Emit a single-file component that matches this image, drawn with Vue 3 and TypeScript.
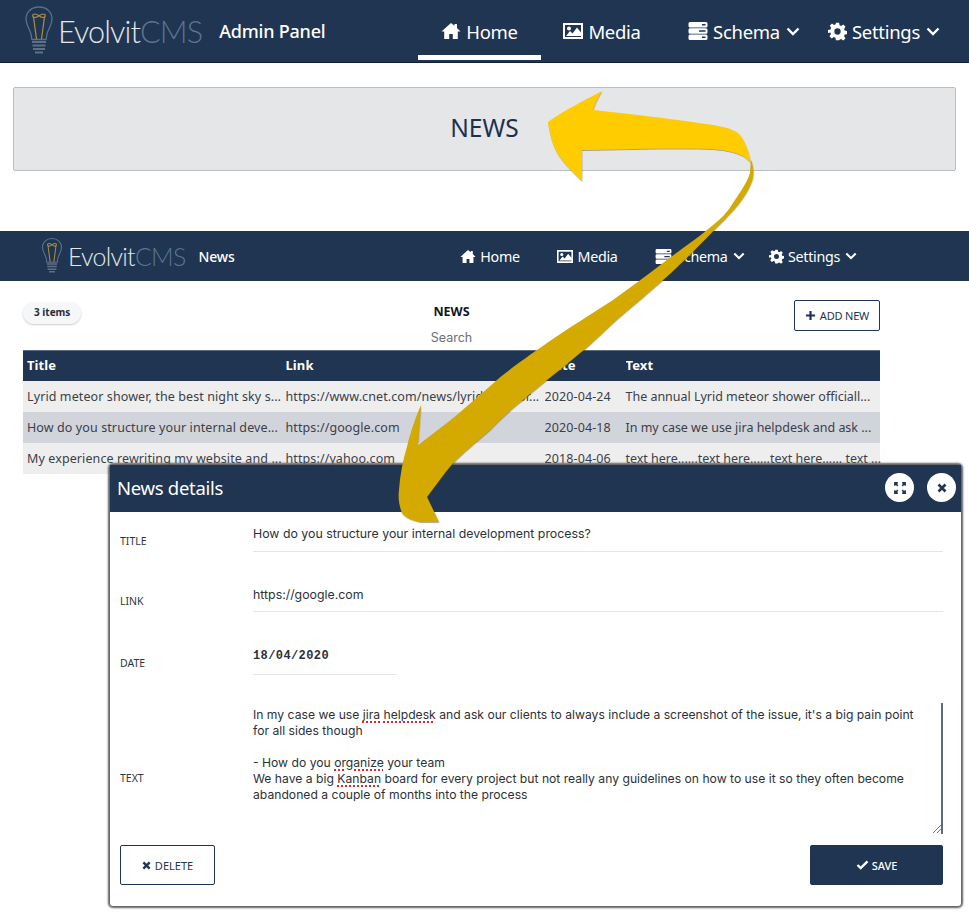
<script setup lang="ts">
const rows = [
  { title: 'Lyrid meteor shower, the best night sky s...', link: 'https://www.cnet.com/news/lyrid-meteor...', date: '2020-04-24', text: 'The annual Lyrid meteor shower officiall...' },
  { title: 'How do you structure your internal deve...', link: 'https://google.com', date: '2020-04-18', text: 'In my case we use jira helpdesk and ask ...' },
  { title: 'My experience rewriting my website and ...', link: 'https://yahoo.com', date: '2018-04-06', text: 'text here......text here......text here...... text ...' },
]
</script>

<template>
  <div class="page">
    <header class="bar bar-main">
      <div class="logo">
        <svg class="bulb" viewBox="0 0 30 52" width="30" height="52">
          <path d="M15 2C7 2 2 7.500 2 14c0 6 3.500 9.500 5 15 .5 2 .5 4 .8 5.500h14.400c.3-1.500.3-3.500.8-5.500 1.500-5.500 5-9 5-15C28 7.500 23 2 15 2z" fill="none" stroke="#5d7087" stroke-width="1.300"/>
          <path d="M11 9c-3 0-3 3.500 0 3.500S16 9 19 9s3 3.500 0 3.500S14 9 11 9zM9.500 12l3 22M20.500 12l-3 22" fill="none" stroke="#b08f3a" stroke-width="1.200"/>
          <path d="M8 37h14M8.500 40.500h13M9 44h12M11 47.500h8" stroke="#5d7087" stroke-width="1.800" fill="none"/>
        </svg>
        <span class="brand">Evolvit<span class="cms">CMS</span></span>
      </div>
      <span class="caption">Admin Panel</span>
      <nav class="nav">
        <a class="nav-item active">
          <svg viewBox="0 0 20 18" width="20" height="18"><path d="M10 1 0.500 9.500h2.700V17h5v-5h3.600v5h5V9.500h2.700L16 6V2h-2.500v1.800z" fill="#fff"/></svg>Home
        </a>
        <a class="nav-item">
          <svg viewBox="0 0 20 18" width="20" height="18"><path fill-rule="evenodd" d="M0 1h20v16H0zM2 3v12h16V3zM3 14l4-5 2.500 2.500L14 5.500l4 5V14zM6 4.500a2 2 0 1 1 0 4 2 2 0 0 1 0-4z" fill="#fff"/></svg>Media
        </a>
        <a class="nav-item">
          <svg viewBox="0 0 20 18" width="20" height="18"><path fill-rule="evenodd" d="M2 0h16a1.500 1.500 0 0 1 1.500 1.500V4A1.500 1.500 0 0 1 18 5.500H2A1.500 1.500 0 0 1 .5 4V1.500A1.500 1.500 0 0 1 2 0zM14 2v1.500h3.500V2zM2 6.300h16a1.500 1.500 0 0 1 1.500 1.500v2.400a1.500 1.500 0 0 1-1.500 1.500H2a1.500 1.500 0 0 1-1.500-1.500V7.800A1.500 1.500 0 0 1 2 6.300zM11 8.300v1.500h6.500V8.300zM2 12.500h16a1.500 1.500 0 0 1 1.500 1.500v2.500A1.500 1.500 0 0 1 18 18H2a1.500 1.500 0 0 1-1.500-1.500V14A1.500 1.500 0 0 1 2 12.500zM14 14.500V16h3.500v-1.500z" fill="#fff"/></svg>Schema<svg class="chev" viewBox="0 0 14 9" width="14" height="9"><path d="M1.500 1.500 7 7l5.500-5.500" fill="none" stroke="#fff" stroke-width="2.400"/></svg>
        </a>
        <a class="nav-item">
          <svg viewBox="0 0 24 24" width="19" height="19"><path fill-rule="evenodd" d="M10 1h4l.6 3.200 2 .8 2.700-1.800 2.800 2.800-1.800 2.700.8 2 3.200.6v4l-3.200.6-.8 2 1.800 2.700-2.800 2.800-2.700-1.800-2 .8L14 23h-4l-.6-3.200-2-.8-2.700 1.800-2.800-2.800 1.800-2.700-.8-2L0 14v-4l3.200-.6.800-2L2.200 4.700 5 1.900l2.700 1.800 2-.8zM12 8a4 4 0 1 0 0 8 4 4 0 0 0 0-8z" fill="#fff"/></svg>Settings<svg class="chev" viewBox="0 0 14 9" width="14" height="9"><path d="M1.500 1.500 7 7l5.500-5.500" fill="none" stroke="#fff" stroke-width="2.400"/></svg>
        </a>
      </nav>
    </header>

    <div class="banner-wrap"><div class="banner">NEWS</div></div>

    <header class="bar bar-sub">
      <div class="logo logo-sm">
        <svg class="bulb" viewBox="0 0 30 52" width="22" height="38">
          <path d="M15 2C7 2 2 7.500 2 14c0 6 3.500 9.500 5 15 .5 2 .5 4 .8 5.500h14.400c.3-1.500.3-3.500.8-5.500 1.500-5.500 5-9 5-15C28 7.500 23 2 15 2z" fill="none" stroke="#5d7087" stroke-width="1.500"/>
          <path d="M11 9c-3 0-3 3.500 0 3.500S16 9 19 9s3 3.500 0 3.500S14 9 11 9zM9.500 12l3 22M20.500 12l-3 22" fill="none" stroke="#b08f3a" stroke-width="1.400"/>
          <path d="M8 37h14M8.500 40.500h13M9 44h12M11 47.500h8" stroke="#5d7087" stroke-width="2" fill="none"/>
        </svg>
        <span class="brand">Evolvit<span class="cms">CMS</span></span>
      </div>
      <span class="caption">News</span>
      <nav class="nav">
        <a class="nav-item">
          <svg viewBox="0 0 20 18" width="16" height="15"><path d="M10 1 0.500 9.500h2.700V17h5v-5h3.600v5h5V9.500h2.700L16 6V2h-2.500v1.800z" fill="#fff"/></svg>Home
        </a>
        <a class="nav-item">
          <svg viewBox="0 0 20 18" width="16" height="15"><path fill-rule="evenodd" d="M0 1h20v16H0zM2 3v12h16V3zM3 14l4-5 2.500 2.500L14 5.500l4 5V14zM6 4.500a2 2 0 1 1 0 4 2 2 0 0 1 0-4z" fill="#fff"/></svg>Media
        </a>
        <a class="nav-item">
          <svg viewBox="0 0 20 18" width="17" height="15"><path fill-rule="evenodd" d="M2 0h16a1.500 1.500 0 0 1 1.500 1.500V4A1.500 1.500 0 0 1 18 5.500H2A1.500 1.500 0 0 1 .5 4V1.500A1.500 1.500 0 0 1 2 0zM14 2v1.500h3.500V2zM2 6.300h16a1.500 1.500 0 0 1 1.500 1.500v2.400a1.500 1.500 0 0 1-1.500 1.500H2a1.500 1.500 0 0 1-1.500-1.500V7.800A1.500 1.500 0 0 1 2 6.300zM11 8.300v1.500h6.500V8.300zM2 12.500h16a1.500 1.500 0 0 1 1.500 1.500v2.500A1.500 1.500 0 0 1 18 18H2a1.500 1.500 0 0 1-1.500-1.500V14A1.500 1.500 0 0 1 2 12.500zM14 14.500V16h3.500v-1.500z" fill="#fff"/></svg>Schema<svg class="chev" viewBox="0 0 14 9" width="12" height="8"><path d="M1.500 1.500 7 7l5.500-5.500" fill="none" stroke="#fff" stroke-width="2.400"/></svg>
        </a>
        <a class="nav-item">
          <svg viewBox="0 0 24 24" width="15" height="15"><path fill-rule="evenodd" d="M10 1h4l.6 3.200 2 .8 2.700-1.800 2.800 2.800-1.800 2.700.8 2 3.200.6v4l-3.200.6-.8 2 1.800 2.700-2.800 2.800-2.700-1.800-2 .8L14 23h-4l-.6-3.200-2-.8-2.700 1.800-2.800-2.800 1.800-2.700-.8-2L0 14v-4l3.200-.6.800-2L2.200 4.700 5 1.900l2.700 1.800 2-.8zM12 8a4 4 0 1 0 0 8 4 4 0 0 0 0-8z" fill="#fff"/></svg>Settings<svg class="chev" viewBox="0 0 14 9" width="12" height="8"><path d="M1.500 1.500 7 7l5.500-5.500" fill="none" stroke="#fff" stroke-width="2.400"/></svg>
        </a>
      </nav>
    </header>

    <section class="list">
      <div class="list-head">
        <span class="pill">3 items</span>
        <div class="list-title">
          <strong>NEWS</strong>
          <span class="search">Search</span>
        </div>
        <button class="btn add">
          <svg viewBox="0 0 12 12" width="11" height="11"><path d="M6 1v10M1 6h10" stroke="#1f3552" stroke-width="2.400"/></svg>ADD NEW
        </button>
      </div>
      <div class="table">
        <div class="tr th"><span>Title</span><span>Link</span><span>Date</span><span>Text</span></div>
        <div v-for="r in rows" :key="r.date" class="tr"><span>{{ r.title }}</span><span>{{ r.link }}</span><span>{{ r.date }}</span><span class="last">{{ r.text }}</span></div>
      </div>
    </section>

    <section class="modal">
      <div class="modal-head">
        <span>News details</span>
        <div class="round-group">
          <span class="round">
            <svg viewBox="0 0 14 14" width="12" height="12"><path d="M1 4.500V1h3.500M9.500 1H13v3.500M13 9.500V13H9.500M4.500 13H1V9.500M1.500 1.500l3 3M12.500 1.500l-3 3M12.500 12.500l-3-3M1.500 12.500l3-3" fill="none" stroke="#1f3552" stroke-width="1.800"/></svg>
          </span>
          <span class="round">
            <svg viewBox="0 0 10 10" width="10" height="10"><path d="M1.500 1.500l7 7M8.500 1.500l-7 7" stroke="#1f3552" stroke-width="2.600"/></svg>
          </span>
        </div>
      </div>
      <div class="form">
        <div class="field f-title"><label>TITLE</label><div class="value line">How do you structure your internal development process?</div></div>
        <div class="field f-link"><label>LINK</label><div class="value line">https://google.com</div></div>
        <div class="field f-date"><label>DATE</label><div class="value line date">18/04/2020</div></div>
        <div class="field f-text">
          <label>TEXT</label>
          <div class="value area">
            <p>In my case we use <u>jira</u> <u>helpdesk</u> and ask our clients to always include a screenshot of the issue, it's a big pain point<br>for all sides though</p>
            <p class="gap">- How do you <u>organize</u> your team<br>We have a big <u>Kanban</u> board for every project but not really any guidelines on how to use it so they often become<br>abandoned a couple of months into the process</p>
            <svg class="grip" viewBox="0 0 10 10" width="10" height="10"><path d="M1 9 9 1M5 9l4-4" stroke="#777" stroke-width="1"/></svg>
          </div>
        </div>
        <div class="actions">
          <button class="btn del">
            <svg viewBox="0 0 10 10" width="9" height="9"><path d="M1.500 1.500l7 7M8.500 1.500l-7 7" stroke="#1f3552" stroke-width="2.600"/></svg>DELETE
          </button>
          <button class="btn save">
            <svg viewBox="0 0 14 11" width="13" height="10"><path d="M1.500 5.500 5 9l7.500-7.500" fill="none" stroke="#fff" stroke-width="2.600"/></svg>SAVE
          </button>
        </div>
      </div>
    </section>

    <svg class="arrow" viewBox="0 0 969 913" width="969" height="913">
      <defs>
        <filter id="soft" x="-5%" y="-5%" width="110%" height="110%">
          <feDropShadow dx="0.300" dy="0.800" stdDeviation="0.700" flood-color="#5a4a00" flood-opacity="0.550"/>
        </filter>
      </defs>
      <path filter="url(#soft)" fill="#d4aa00" d="M751 160C754 168 754 176 752 181C747 195 735 210 717 227C700 245 680 265 663 280C645 296 630 308 613 323C600 335 590 345 580 353C560 370 540 385 523 400C510 410 500 420 490 430C475 443 463 453 453 463C443 475 435 486 427 497L439 522C430 522 425 522 420 522C412 520 406 518 402 513C399 505 398 498 399 490C400 475 403 460 407 447C411 430 416 417 421 405C420 420 419 433 418 445C428 438 437 430 447 423C463 410 480 395 497 380C515 365 530 355 547 343C570 327 590 315 613 300C630 288 647 275 663 263C680 250 695 240 707 230C720 220 728 212 733 203C742 190 748 180 750 173Z"/>
      <path filter="url(#soft)" fill="#ffcc00" d="M602 91C597 99 595 104 593 110C640 115 680 120 713 125C730 128 738 131 742 138C747 147 749 153 751 163C745 155 735 151 713 149C680 148 630 149 582 150L582 181C570 170 562 160 560 157C553 147 550 135 548 122C565 110 585 100 602 91Z"/>
    </svg>
  </div>
</template>

<style scoped>
.page {
  position: relative;
  width: 969px;
  height: 913px;
  overflow: hidden;
  background: #fff;
  font-family: "Noto Sans", "Open Sans", sans-serif;
  color: #1f3552;
}
.bar {
  display: flex;
  align-items: center;
  background: #1f3552;
  color: #fff;
}
.bar-main {
  height: 62px;
  padding: 0 26px 0 24px;
  border-bottom: 1px solid #0f1f33;
}
.bar-sub {
  height: 50px;
  padding: 0 108px 0 41px;
  margin-top: 60px;
}
.logo {
  display: flex;
  align-items: center;
  gap: 4px;
}
.brand {
  font-family: "Lato", sans-serif;
  font-weight: 300;
  font-size: 30.600px;
  letter-spacing: -0.900px;
  color: #e4e7ea;
}
.cms { color: #5a7492; }
.logo-sm { gap: 5px; }
.logo-sm .brand { font-size: 24.900px; letter-spacing: -0.700px; }
.caption {
  font-size: 18px;
  font-weight: 500;
  margin-left: 17px;
  letter-spacing: -0.200px;
}
.bar-sub .caption { font-size: 14px; margin-left: 13px; }
.nav {
  display: flex;
  align-items: stretch;
  height: 100%;
  margin-left: auto;
}
.nav-item {
  display: flex;
  align-items: center;
  justify-content: center;
  box-sizing: border-box;
  font-size: 18.500px;
  letter-spacing: -0.300px;
  position: relative;
}
.bar-main .nav-item { gap: 5px; }
.bar-main .nav-item:nth-child(1) { width: 123px; }
.bar-main .nav-item:nth-child(2) { width: 122px; }
.bar-main .nav-item:nth-child(3) { width: 162px; }
.bar-main .nav-item:nth-child(4) { width: 118px; }
.bar-main .active::after {
  content: "";
  position: absolute;
  left: 0;
  right: 0;
  bottom: 2px;
  height: 5px;
  background: #fff;
}
.bar-sub .nav-item { font-size: 14.300px; gap: 4px; }
.bar-sub .nav-item:nth-child(1) { width: 100px; }
.bar-sub .nav-item:nth-child(2) { width: 95px; }
.bar-sub .nav-item:nth-child(3) { width: 130px; }
.bar-sub .nav-item:nth-child(4) { width: 96px; }
.chev { margin-left: 1px; }
.banner-wrap { padding: 24px 13px 0; }
.banner {
  height: 82px;
  line-height: 79px;
  text-align: center;
  background: #e5e6e8;
  border: 1px solid #bdbdbd;
  border-radius: 2px;
  font-size: 24.500px;
  color: #1a3050;
}
.list { padding: 0 89px 0 23px; }
.list-head {
  display: flex;
  justify-content: space-between;
  align-items: flex-start;
  height: 69px;
  position: relative;
}
.pill {
  margin-top: 21px;
  padding: 0 11px;
  height: 22px;
  line-height: 21px;
  border-radius: 11px;
  background: #f6f7f8;
  box-shadow: 0 1px 2px rgba(0, 0, 0, 0.2);
  font-size: 10px;
  font-weight: 700;
  color: #26303c;
}
.list-title {
  position: absolute;
  left: 0;
  right: 0;
  top: 22px;
  display: flex;
  flex-direction: column;
  align-items: center;
  gap: 9px;
  pointer-events: none;
}
.list-title strong { font-size: 12.500px; color: #10151c; line-height: 17px; }
.search {
  font-family: "Inter", sans-serif;
  font-size: 12.500px;
  line-height: 17px;
  color: #6b7076;
}
.btn {
  display: inline-flex;
  align-items: center;
  justify-content: center;
  box-sizing: border-box;
  background: #fff;
  border: 1px solid #1f3552;
  border-radius: 2px;
  font-family: "Noto Sans", sans-serif;
  color: #1f3552;
  cursor: pointer;
}
.add {
  margin-top: 19px;
  width: 86px;
  height: 31px;
  gap: 4px;
  font-size: 11px;
  font-weight: 400;
  letter-spacing: -0.200px;
}
.table { font-size: 12.500px; color: #3b4048; }
.tr {
  display: grid;
  grid-template-columns: 258.500px 259px 81px 1fr;
  align-items: center;
  height: 31px;
  background: #eeeeee;
  padding-left: 4px;
  letter-spacing: 0.100px;
  white-space: nowrap;
}
.tr:nth-child(3) { background: #d2d4dc; }
.tr > span { overflow: hidden; }
.tr > .last { letter-spacing: -0.020px; overflow: visible; }
.th {
  height: 31px;
  background: #1f3552;
  color: #fff;
  font-weight: 700;
  font-size: 13px;
  padding-bottom: 2px;
  border-top: 1px solid #5b6a7c;
  box-sizing: border-box;
}
.modal {
  position: absolute;
  left: 110px;
  top: 465px;
  width: 851px;
  height: 441px;
  box-sizing: border-box;
  background: #fff;
  border-radius: 3px;
  box-shadow: 0 0 2px 2px #606060;
  font-family: "Inter", sans-serif;
}
.modal-head {
  height: 47px;
  display: flex;
  align-items: center;
  justify-content: space-between;
  padding: 0 5px 2px 7px;
  box-sizing: border-box;
  background: #1f3552;
  color: #fff;
  font-family: "Noto Sans", sans-serif;
  font-size: 18.500px;
  letter-spacing: -0.300px;
}
.round-group { display: flex; gap: 13px; }
.round {
  width: 29px;
  height: 29px;
  border-radius: 50%;
  background: #fff;
  display: flex;
  align-items: center;
  justify-content: center;
}
.form { padding: 0 18px 0 10px; position: relative; }
.field {
  display: grid;
  grid-template-columns: 133px 1fr;
}
.field label {
  font-family: "Noto Sans", sans-serif;
  font-size: 10.500px;
  color: #2d3640;
  align-self: center;
}
.value {
  font-size: 12.350px;
  color: #2c3138;
}
.line {
  height: 39px;
  line-height: 44px;
  border-bottom: 1px solid #e3e5e7;
  box-sizing: content-box;
}
.f-title label { padding-top: 18px; }
.f-link { margin-top: 20px; }
.f-link .line { line-height: 46px; }
.f-link label { padding-top: 18px; }
.f-date { margin-top: 23px; }
.f-date label { padding-top: 15px; }
.f-date .line { line-height: 42px; }
.date {
  width: 143px;
  font-family: "Liberation Mono", monospace;
  font-weight: 700;
  font-size: 12px;
  letter-spacing: 0.400px;
}
.f-text { margin-top: 28px; height: 131px; }
.f-text label { padding-top: 19px; }
.area {
  position: relative;
  font-size: 12.170px;
  line-height: 16px;
  padding-top: 4px;
  box-sizing: border-box;
  border-right: 2px solid #5a6a80;
}
.area p { margin: 0; }
.area .gap { margin-top: 16px; }
.area u {
  text-decoration: underline dotted #e02828;
  text-decoration-thickness: 1.500px;
  text-underline-offset: 2px;
}
.grip { position: absolute; right: -1px; bottom: 0; }
.actions {
  display: flex;
  justify-content: space-between;
  margin-top: 11px;
}
.del {
  width: 95px;
  height: 40px;
  gap: 4px;
  font-size: 11px;
}
.save {
  width: 133px;
  height: 40px;
  gap: 3px;
  background: #1f3552;
  color: #fff;
  font-size: 11px;
  font-weight: 500;
}
.arrow {
  position: absolute;
  left: 0;
  top: 0;
  pointer-events: none;
}
</style>
